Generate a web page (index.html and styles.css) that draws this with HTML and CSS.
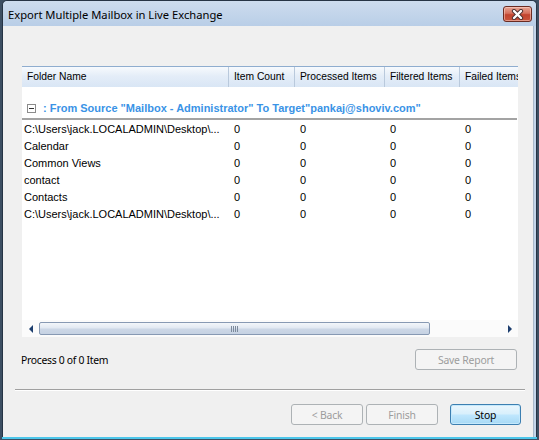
FILE: index.html
```html
<!DOCTYPE html>
<html>
<head>
<meta charset="utf-8">
<link rel="stylesheet" href="styles.css">
</head>
<body>
<div class="window">
  <div class="titlebar">
    <span class="title">Export Multiple Mailbox in Live Exchange</span>
    <div class="close">
      <svg width="17" height="11" viewBox="0 0 17 11">
        <path d="M5 2 L12 9 M12 2 L5 9" stroke="#4a3030" stroke-width="4.2" stroke-linecap="round"/>
        <path d="M5 2 L12 9 M12 2 L5 9" stroke="#ffffff" stroke-width="2.4" stroke-linecap="round"/>
      </svg>
    </div>
  </div>
  <div class="client">
    <div class="list">
      <div class="header">
        <div class="col c1">Folder Name</div>
        <div class="col c2">Item Count</div>
        <div class="col c3">Processed Items</div>
        <div class="col c4">Filtered Items</div>
        <div class="col c5">Failed Items</div>
      </div>
      <div class="group">
        <span class="minus"></span>
        <span class="gtext">: From Source "Mailbox - Administrator" To Target"pankaj@shoviv.com"</span>
      </div>
      <div class="gline"></div>
      <div class="rows">
        <div class="row"><span class="c1">C:\Users\jack.LOCALADMIN\Desktop\...</span><span class="c2">0</span><span class="c3">0</span><span class="c4">0</span><span class="c5">0</span></div>
        <div class="row"><span class="c1">Calendar</span><span class="c2">0</span><span class="c3">0</span><span class="c4">0</span><span class="c5">0</span></div>
        <div class="row"><span class="c1">Common Views</span><span class="c2">0</span><span class="c3">0</span><span class="c4">0</span><span class="c5">0</span></div>
        <div class="row"><span class="c1">contact</span><span class="c2">0</span><span class="c3">0</span><span class="c4">0</span><span class="c5">0</span></div>
        <div class="row"><span class="c1">Contacts</span><span class="c2">0</span><span class="c3">0</span><span class="c4">0</span><span class="c5">0</span></div>
        <div class="row"><span class="c1">C:\Users\jack.LOCALADMIN\Desktop\...</span><span class="c2">0</span><span class="c3">0</span><span class="c4">0</span><span class="c5">0</span></div>
      </div>
      <div class="hscroll">
        <div class="arrow"><span class="tri-left"></span></div>
        <div class="track"><div class="thumb"><span class="grip"></span></div></div>
        <div class="arrow"><span class="tri-right"></span></div>
      </div>
    </div>
    <div class="status">
      <span class="stext">Process 0 of 0 Item</span>
      <button class="btn disabled save">Save Report</button>
    </div>
    <div class="sep"></div>
    <div class="buttons">
      <button class="btn disabled">&lt; Back</button>
      <button class="btn disabled">Finish</button>
      <button class="btn default">Stop</button>
    </div>
  </div>
</div>
</body>
</html>
```
FILE: styles.css
```css
html, body {
  margin: 0;
  padding: 0;
}
body {
  width: 539px;
  height: 440px;
  overflow: hidden;
  background: #3d4f63;
  font-family: "Liberation Sans", Arial, sans-serif;
}
.window {
  margin-left: 2px;
  width: 533px;
  height: 436px;
  border: 1px solid #263445;
  border-bottom: none;
  border-radius: 5px 5px 0 0;
  display: flex;
  flex-direction: column;
  background: #c4d5ea;
  box-shadow: 0 2px 0 #4cc6ea;
}
.titlebar {
  height: 25px;
  flex: none;
  display: flex;
  align-items: center;
  background: linear-gradient(#cddcee, #b9cee7);
  border-radius: 5px 5px 0 0;
  position: relative;
}
.title {
  font-family: "Noto Sans", sans-serif;
  font-size: 11.2px;
  color: #000;
  margin-left: 5px;
  margin-top: 1px;
}
.close {
  position: absolute;
  left: 500px;
  top: 5px;
  width: 29px;
  height: 16px;
  box-sizing: border-box;
  border: 1px solid #6a2b22;
  border-radius: 3px;
  background: linear-gradient(#e7a595 0%, #d6705c 45%, #c2442f 55%, #c9543c 100%);
  display: flex;
  align-items: center;
  justify-content: center;
  box-shadow: inset 0 0 0 1px rgba(255,220,210,0.5);
}
.close svg { display: block; }
.client {
  flex: 1;
  background: #f0f0f0;
  margin-right: 2px;
  border-right: 1px solid #a9b9cb;
  display: flex;
  flex-direction: column;
  font-size: 11px;
}
.list {
  margin: 40px 0 0 19px;
  width: 496px;
  height: 271px;
  background: #fff;
  display: flex;
  flex-direction: column;
  overflow: hidden;
}
.header {
  height: 20px;
  flex: none;
  display: flex;
  border-top: 1px solid #8fadcf;
  background: linear-gradient(#f7fafd 0%, #e4edf8 45%, #d9e6f5 100%);
}
.col {
  height: 20px;
  line-height: 20px;
  padding-left: 5px;
  box-sizing: border-box;
  border-right: 1px solid #b9c9dc;
  white-space: nowrap;
  overflow: hidden;
  color: #000;
  font-size: 10.3px;
}
.header .c1 { width: 207px; }
.header .c2 { width: 66px; }
.header .c3 { width: 90px; }
.header .c4 { width: 75px; }
.header .c5 { width: 58px; border-right: none; }
.group {
  height: 17px;
  margin-top: 12px;
  display: flex;
  align-items: center;
  padding-left: 5px;
}
.minus {
  width: 7px;
  height: 7px;
  border: 1px solid #8c8c8c;
  position: relative;
  margin-right: 7px;
  margin-top: 1px;
}
.minus::after {
  content: "";
  position: absolute;
  left: 1px;
  top: 3px;
  width: 5px;
  height: 1px;
  background: #333;
}
.gtext {
  color: #3a93e6;
  font-weight: bold;
  font-size: 11px;
  white-space: nowrap;
}
.gline {
  height: 2px;
  margin-top: 2px;
  width: 495px;
  background: #a3a3a3;
  flex: none;
}
.rows {
  margin-top: 1px;
}
.row {
  height: 17px;
  line-height: 17px;
  display: flex;
  white-space: nowrap;
  color: #000;
}
.row span { display: block; overflow: hidden; }
.row .c1 { width: 207px; padding-left: 2px; box-sizing: border-box; }
.row .c2 { width: 66px; padding-left: 5px; box-sizing: border-box; }
.row .c3 { width: 90px; padding-left: 5px; box-sizing: border-box; }
.row .c4 { width: 75px; padding-left: 5px; box-sizing: border-box; }
.row .c5 { width: 58px; padding-left: 5px; box-sizing: border-box; }
.hscroll {
  margin-top: auto;
  height: 17px;
  flex: none;
  display: flex;
  background: #fbfbfb;
}
.arrow {
  width: 17px;
  height: 17px;
  display: flex;
  align-items: center;
  justify-content: center;
}
.tri-left {
  width: 0; height: 0;
  border-top: 4px solid transparent;
  border-bottom: 4px solid transparent;
  border-right: 4px solid #1d3e6e;
}
.tri-right {
  width: 0; height: 0;
  border-top: 4px solid transparent;
  border-bottom: 4px solid transparent;
  border-left: 4px solid #1d3e6e;
}
.track {
  flex: 1;
  display: flex;
  align-items: center;
}
.thumb {
  width: 391px;
  height: 13px;
  box-sizing: border-box;
  border: 1px solid #8799b3;
  border-radius: 2px;
  background: linear-gradient(#f3f6fa 0%, #e2e9f2 45%, #ccd7e6 55%, #c6d2e3 100%);
  display: flex;
  align-items: center;
  justify-content: center;
}
.grip {
  width: 7px;
  height: 6px;
  background: repeating-linear-gradient(90deg, #7c8a9c 0 1px, transparent 1px 2px);
}
.status {
  margin: 12px 0 0 18px;
  width: 496px;
  display: flex;
  align-items: center;
  justify-content: space-between;
}
.stext {
  font-family: "Noto Sans", sans-serif;
  font-size: 10.4px;
  letter-spacing: -0.3px;
  color: #000;
}
.btn {
  font-family: "Noto Sans", sans-serif;
  font-size: 10.4px;
  letter-spacing: -0.2px;
  height: 21px;
  width: 72px;
  border-radius: 3px;
  padding: 0;
  margin: 0;
  box-sizing: border-box;
}
.btn.disabled {
  border: 1px solid #adb2b5;
  background: #f4f4f4;
  color: #9c9c9c;
}
.btn.save {
  width: 102px;
}
.btn.default {
  border: 1px solid #3c7fb1;
  background: linear-gradient(#eaf6fd 0%, #d9f0fc 45%, #bee6fd 55%, #a7d9f5 100%);
  color: #000;
  box-shadow: inset 0 0 0 1px #c5e9fc;
}
.sep {
  margin: 19px 0 0 12px;
  width: 510px;
  height: 1px;
  background: #a0a0a0;
  border-bottom: 1px solid #fff;
}
.buttons {
  margin: 13px 0 0 288px;
  display: flex;
}
.buttons .btn + .btn { margin-left: 3px; }
.buttons .btn.default { margin-left: 12px; width: 71px; }
```
